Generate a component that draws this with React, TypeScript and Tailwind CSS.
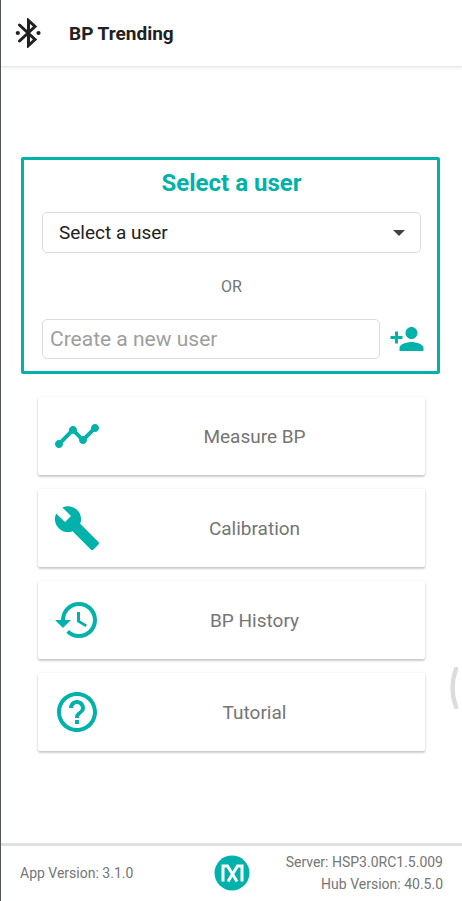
import { useState } from "react";
import type { ReactNode } from "react";
import { MdBuild, MdHelpOutline, MdHistory, MdPersonAdd, MdTimeline } from "react-icons/md";

function BluetoothIcon() {
  return (
    <svg viewBox="0 0 26 30" className="h-[30px] w-[26px]" aria-hidden="true">
      <path
        d="M4.5 7 20 21.5 13.5 27.5V2.5L20 8.5 4.5 23"
        fill="none"
        stroke="currentColor"
        strokeWidth="3"
        strokeLinejoin="miter"
        strokeLinecap="round"
      />
      <circle cx="2.8" cy="15" r="2.1" fill="currentColor" />
      <circle cx="23.5" cy="15" r="2.1" fill="currentColor" />
    </svg>
  );
}

function BrandMark() {
  return (
    <svg viewBox="0 0 36 36" className="size-9" role="img" aria-label="Maxim">
      <circle cx="18" cy="18" r="17.5" fill="#00b2a9" />
      <g fill="none" stroke="#fff" strokeWidth="3">
        <path d="M9 26.5V11H13.5L23 26.5" />
        <path d="M28 26.5V11H23.5L14 26.5" />
      </g>
    </svg>
  );
}

function MenuCard({ icon, label }: { icon: ReactNode; label: string }) {
  return (
    <button
      type="button"
      className="flex h-[78px] w-full items-center rounded-xs bg-white pr-[17px] pl-[15px] text-[19px] text-[#757575] shadow-[0_1px_3px_rgba(0,0,0,0.16),0_2px_2px_rgba(0,0,0,0.12)]"
    >
      <span className="shrink-0 text-[#00b2a9]">{icon}</span>
      <span className="flex-1 pt-0.5 text-center">{label}</span>
    </button>
  );
}

export default function App() {
  const [name, setName] = useState("");

  return (
    <div className="relative flex min-h-screen flex-col overflow-hidden border-l border-[#50555a] bg-white font-[Roboto,sans-serif] text-[#757575]">
      <header className="flex h-[67px] items-center gap-7 border-b border-[#e8e8e8] pl-3.5 text-[#212121] shadow-[0_1px_3px_rgba(0,0,0,0.08)]">
        <button type="button" aria-label="Bluetooth">
          <BluetoothIcon />
        </button>
        <h1 className="pt-0.5 text-[19px] font-bold">BP Trending</h1>
      </header>

      <main className="flex flex-1 flex-col pt-[90px]">
        <section className="mr-[22px] ml-5 flex h-[217px] flex-col rounded-xs border-3 border-[#00b2a9] pr-4 pl-[18px]">
          <h2 className="pt-[7px] text-center text-2xl font-bold text-[#00b2a9]">Select a user</h2>
          <div className="relative mt-[13px] flex h-[41px] shrink-0">
            <select
              aria-label="Select a user"
              className="w-full appearance-none rounded-[5px] border border-[#dcdcdc] bg-white pt-0.5 pl-4 text-[19px] text-[#212121]"
            >
              <option>Select a user</option>
            </select>
            <svg viewBox="0 0 12 6" className="pointer-events-none absolute top-[18px] right-4 h-1.5 w-3" aria-hidden="true">
              <path d="M0 0h12L6 6z" fill="#424242" />
            </svg>
          </div>
          <p className="mt-[22px] mb-5 text-center text-base">OR</p>
          <div className="-mr-1 flex items-center gap-[9px]">
            <input
              aria-label="Create a new user"
              placeholder="Create a new user"
              value={name}
              onChange={(event) => setName(event.target.value)}
              className="h-10 min-w-0 flex-1 rounded-[5px] border border-[#dcdcdc] px-[7px] text-[21px] text-[#212121] placeholder:text-[#9e9e9e]"
            />
            <button type="button" aria-label="Add user" className="text-[#00b2a9]">
              <MdPersonAdd size={36} />
            </button>
          </div>
        </section>

        <nav aria-label="Main menu" className="mx-[37px] mt-[23px] flex flex-col gap-3.5">
          <MenuCard icon={<MdTimeline size={48} />} label="Measure BP" />
          <MenuCard icon={<MdBuild size={48} />} label="Calibration" />
          <MenuCard icon={<MdHistory size={48} />} label="BP History" />
          <MenuCard icon={<MdHelpOutline size={48} />} label="Tutorial" />
        </nav>
      </main>

      <footer className="grid h-[58px] grid-cols-[1fr_auto_1fr] items-center border-t-3 border-[#e0e0e0] px-[19px] pb-0.5 text-sm">
        <p>App Version: 3.1.0</p>
        <BrandMark />
        <p className="text-right leading-[22px]">
          Server: HSP3.0RC1.5.009
          <br />
          Hub Version: 40.5.0
        </p>
      </footer>

      <svg viewBox="0 0 12 44" className="absolute top-[666px] right-0 h-11 w-3" aria-hidden="true">
        <path d="M6 3Q-1 22 6 41" fill="none" stroke="#dcdcdc" strokeWidth="4.5" strokeLinecap="round" />
      </svg>
    </div>
  );
}
